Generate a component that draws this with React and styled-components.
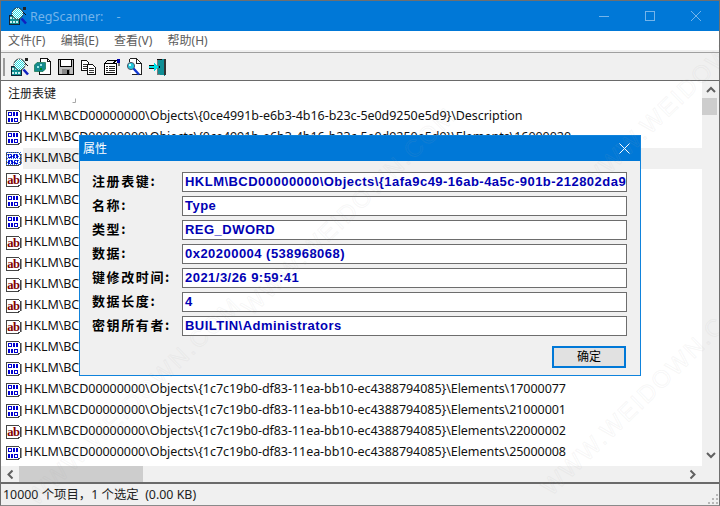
import React from "react";
import styled, { createGlobalStyle } from "styled-components";

const Global = createGlobalStyle`
  html, body { margin: 0; padding: 0; background: #fff; }
  #root { width: 720px; height: 506px; overflow: hidden; }
  * { box-sizing: border-box; }
`;

const UI = `"Noto Sans", "Noto Sans CJK SC", sans-serif`;

const Win = styled.div`
  position: relative;
  width: 720px;
  height: 506px;
  display: flex;
  flex-direction: column;
  border: 1px solid #6f6f6f;
  border-bottom-color: #8a8a8a;
  overflow: hidden;
  font-family: ${UI};
  font-size: 12px;
  color: #000;
  background: #fff;
`;
const TitleBar = styled.div`
  height: 30px;
  flex: none;
  background: #0078d7;
  display: flex;
  align-items: center;
  padding-left: 8px;
  color: #74b4ea;
  font-size: 12.5px;
`;
const TitleText = styled.span`
  margin-left: 3px;
  white-space: pre;
`;
const Caption = styled.div`
  margin-left: auto;
  display: flex;
  height: 100%;
  align-items: center;
`;
const CaptionBtn = styled.div`
  width: 46px;
  height: 100%;
  display: flex;
  align-items: center;
  justify-content: center;
`;
const MenuBar = styled.div`
  height: 18px;
  flex: none;
  display: flex;
  align-items: center;
  padding-left: 7px;
  gap: 15.3px;
  color: #5c5c5c;
  background: #fff;
  line-height: 18px;
  margin-top: 1px;
`;
const MenuItem = styled.span``;
const MenuRule = styled.div`
  flex: none;
  height: 3px;
  background: #f0f0f0;
  border-bottom: 1px solid #a0a0a0;
`;
const Toolbar = styled.div`
  height: 28px;
  flex: none;
  display: flex;
  align-items: center;
  background: #f0f0f0;
  padding-left: 2px;
  border-bottom: 1px solid #6a6a6a;
`;
const Grip = styled.div`
  width: 2px;
  height: 18px;
  background: #9a9a9a;
  margin-right: 3px;
`;
const ToolBtn = styled.div`
  width: 23px;
  height: 22px;
  display: flex;
  align-items: center;
  justify-content: center;
`;
const Body = styled.div`
  flex: 1;
  min-height: 0;
  display: grid;
  grid-template-columns: 1fr 17px;
  grid-template-rows: 1fr 16px;
`;
const ListPane = styled.div`
  overflow: hidden;
  background: #fff;
`;
const Header = styled.div`
  height: 25px;
  display: flex;
  align-items: center;
  padding: 0 0 2px 7px;
  color: #1a1a1a;
`;
const SortMark = styled.span`
  margin-left: 16px;
  width: 5px;
  height: 5px;
  display: inline-block;
`;
const Row = styled.div`
  height: 21px;
  display: flex;
  align-items: center;
  padding-left: 5px;
  white-space: nowrap;
`;
const RowIcon = styled.span`
  width: 16px;
  height: 16px;
  flex: none;
  margin: 1px 1px 0 0;
  display: flex;
`;
const RowText = styled.span`
  flex: 1;
  height: 21px;
  line-height: 20px;
  padding-left: 1px;
  font-size: 12.5px;
  letter-spacing: ${(p) => p.$ls}px;
  background: ${(p) => (p.$sel ? "#f0f0f0" : "transparent")};
  color: #111;
`;
const VBar = styled.div`
  grid-row: 1 / 3;
  grid-column: 2;
  background: #f0f0f0;
  display: flex;
  flex-direction: column;
`;
const VArrow = styled.div`
  height: 17px;
  display: flex;
  align-items: center;
  justify-content: center;
  margin-top: ${(p) => p.$top || 0}px;
`;
const VThumb = styled.div`
  height: 17px;
  width: 15px;
  background: #cdcdcd;
`;
const HBar = styled.div`
  background: #f0f0f0;
  display: flex;
  align-items: center;
`;
const HArrow = styled.div`
  width: 18px;
  height: 16px;
  display: flex;
  align-items: center;
  justify-content: center;
  margin-left: ${(p) => (p.$end ? "auto" : "0")};
`;
const HThumb = styled.div`
  width: 124px;
  height: 16px;
  background: #cdcdcd;
`;
const Status = styled.div`
  position: relative;
  height: 23px;
  flex: none;
  display: flex;
  align-items: center;
  padding: 0 0 1px 2px;
  background: #f0f0f0;
  border-top: 2px solid #6a6a6a;
  color: #222;
  font-size: 12.4px;
  white-space: pre;
`;
const SizeGrip = styled.span`
  position: absolute;
  right: 1px;
  bottom: 1px;
  display: flex;
`;

const Dialog = styled.div`
  position: absolute;
  left: 78px;
  top: 134px;
  width: 562px;
  height: 241px;
  background: #f0f0f0;
  border: 1px solid #0f83dc;
  display: flex;
  flex-direction: column;
`;
const DlgTitle = styled.div`
  height: 25px;
  flex: none;
  background: #0078d7;
  color: #fff;
  display: flex;
  align-items: center;
  padding: 0 10px 1px 3px;
  justify-content: space-between;
`;
const DlgBody = styled.div`
  flex: 1;
  padding: 11px 13px 7px 12px;
  display: flex;
  flex-direction: column;
  gap: 4px;
`;
const FieldRow = styled.div`
  display: flex;
  height: 20px;
  align-items: center;
`;
const Label = styled.div`
  width: 90px;
  flex: none;
  font-weight: 700;
  font-size: 13px;
  letter-spacing: 1.6px;
  line-height: 18px;
  margin-top: -2px;
  color: #000;
  font-family: "Noto Sans CJK SC", sans-serif;
  white-space: nowrap;
`;
const Field = styled.div`
  flex: 1;
  height: 20px;
  background: #fff;
  border: 1px solid #6d6d6d;
  color: #0000b4;
  font-family: "Liberation Sans", sans-serif;
  font-weight: 700;
  font-size: 13px;
  letter-spacing: 0.47px;
  line-height: 18px;
  padding-left: 2px;
  white-space: nowrap;
  overflow: hidden;
`;
const Footer = styled.div`
  display: flex;
  justify-content: flex-end;
  margin-top: 6px;
  padding-right: 1px;
`;
const OkBtn = styled.button`
  width: 74px;
  height: 22px;
  background: #e1e1e1;
  border: 2px solid #0078d7;
  border-radius: 0;
  padding: 0;
  font-family: ${UI};
  font-size: 12px;
  color: #000;
  line-height: 16px;
`;
const Mark = styled.div`
  position: absolute;
  left: ${(p) => p.$x}px;
  top: ${(p) => p.$y}px;
  transform: rotate(-44deg);
  transform-origin: 0 0;
  font-family: "Liberation Sans", sans-serif;
  font-size: 24px;
  letter-spacing: 2px;
  color: transparent;
  -webkit-text-stroke: 1px rgba(170, 170, 170, 0.1);
  white-space: nowrap;
  pointer-events: none;
`;

/* ---------- icons ---------- */
const Px = ({ s = 18, vb = 18, children }) => (
  <svg width={s} height={s} viewBox={`0 0 ${vb} ${vb}`} shapeRendering="crispEdges">
    {children}
  </svg>
);
const Doc = () => (
  <>
    <path d="M0.5 1.5H12.5L14.5 3.5V12.5L12 14.5H0.5Z" fill="#fff" stroke="#444" />
    <rect x="15" y="3" width="1" height="10" fill="#999" />
  </>
);
const Zero = ({ x, y }) => (
  <>
    <rect x={x} y={y} width="4" height="4" fill="#0000d0" />
    <rect x={x + 1} y={y + 1} width="2" height="2" fill="#fff" />
  </>
);
const One = ({ x, y }) => <rect x={x} y={y} width="2" height="4" fill="#0000d0" />;
const BinIcon = ({ sel }) => (
  <Px s={16} vb={16}>
    <Doc />
    <Zero x={2} y={3} />
    <One x={7} y={3} />
    <One x={10} y={3} />
    <One x={2} y={9} />
    <One x={5} y={9} />
    <Zero x={8} y={9} />
    {sel && (
      <g fill="#2f6fe8">
        {Array.from({ length: 7 }).map((_, r) =>
          Array.from({ length: 8 }).map((_, c) => (
            <rect key={`${r}-${c}`} x={c * 2 + (r % 2)} y={1 + r * 2} width="1" height="1" />
          ))
        )}
      </g>
    )}
  </Px>
);
const AbIcon = () => (
  <svg width="16" height="16" viewBox="0 0 16 16">
    <g shapeRendering="crispEdges">
      <Doc />
    </g>
    <text x="1.2" y="11.5" fontFamily="Liberation Serif, serif" fontWeight="700" fontSize="12.5" fill="#800000" letterSpacing="-0.5">
      ab
    </text>
  </svg>
);
const lensDots = [];
for (let i = 0; i < 12; i++) {
  for (let j = 0; j < 12; j++) {
    if ((i + j) % 2 === 0 && Math.hypot(i - 5, j - 5) < 5.2) lensDots.push([3 + i, 1 + j]);
  }
}
const ScanIcon = () => (
  <Px>
    <rect x="0" y="8" width="11" height="10" fill="#123" />
    <rect x="1" y="9" width="9" height="8" fill="#0f8f92" />
    {[1, 4, 7].map((x) => [10, 14].map((y) => <rect key={`${x}${y}`} x={x} y={y} width="2" height="2" fill="#c8f2f2" />))}
    <circle cx="8.5" cy="6.5" r="5.5" fill="#22dce2" stroke="#333" shapeRendering="auto" />
    {lensDots.map(([x, y]) => <rect key={`${x}-${y}`} x={x} y={y} width="1" height="1" fill="#fff" />)}
    <path d="M12.5 11.5L17 16.5" stroke="#1020c0" strokeWidth="2.6" shapeRendering="auto" />
    <rect x="14" y="0" width="3" height="3" fill="#222" />
    <path d="M14 5L17 8" stroke="#111" shapeRendering="auto" />
  </Px>
);
const CubeDocIcon = () => (
  <Px>
    <path d="M6.5 3.5V0.5H13.5L16.5 3.5V16.5H5.5V13" stroke="#111" fill="#fff" />
    <path d="M13.5 0.5V3.5H16.5" stroke="#111" fill="none" />
    <path d="M3 4.5H11.5V11L9 13.5H0.5V7Z" fill="#158a8e" stroke="#063" strokeWidth="0.6" shapeRendering="auto" />
    <rect x="3" y="8" width="2" height="2" fill="#9fe8e8" />
    <rect x="6" y="6" width="2" height="2" fill="#9fe8e8" />
    <rect x="6" y="10" width="2" height="2" fill="#082" />
  </Px>
);
const FloppyIcon = () => (
  <Px>
    <rect x="1.5" y="1.5" width="15" height="15" fill="#bdbdbd" stroke="#000" strokeWidth="1.4" />
    <rect x="4" y="2" width="10" height="7" fill="#fff" />
    <rect x="4" y="8" width="10" height="1" fill="#000" />
    <rect x="3" y="2" width="1" height="7" fill="#000" />
    <rect x="14" y="2" width="1" height="7" fill="#000" />
    <rect x="5" y="11" width="8" height="5" fill="#888" />
    <rect x="10" y="12" width="2" height="4" fill="#000" />
  </Px>
);
const CopyIcon = () => (
  <Px>
    <path d="M1.5 2.5H6.5L8.5 4.5V12.5H1.5Z" fill="#fff" stroke="#111" />
    <path d="M3 6.5H7M3 8.5H7M3 10.5H7" stroke="#333" />
    <path d="M7.5 6.5H12.5L15.5 9.5V16.5H7.5Z" fill="#fff" stroke="#111" />
    <path d="M9 10.5H14M9 12.5H14M9 14.5H14" stroke="#333" />
  </Px>
);
const PropsIcon = () => (
  <Px>
    <path d="M1.5 5.5H13.5V16.5H1.5Z" fill="#fff" stroke="#000" />
    <path d="M1.5 5.5L4.5 2.5H13" stroke="#000" fill="none" />
    <path d="M3 8.5H5M6 8.5H12M3 10.5H5M6 10.5H12M3 12.5H5M6 12.5H12M3 14.5H12" stroke="#222" />
    <path d="M10 5L15 1.5" stroke="#000" />
    <rect x="14" y="1" width="3" height="4" fill="#0000a8" />
    <rect x="15" y="5" width="2" height="3" fill="#777" />
  </Px>
);
const FindIcon = () => (
  <Px>
    <path d="M3.5 0.5H10.5L15.5 5.5V16.5H5.5" fill="#fff" stroke="#222" />
    <path d="M3.5 0.5V4" stroke="#222" />
    <path d="M10.5 0.5V5.5H15.5" stroke="#222" fill="none" />
    <circle cx="5" cy="8" r="3.6" fill="#22c8dc" stroke="#556" shapeRendering="auto" />
    <rect x="3" y="6" width="2" height="2" fill="#cff" />
    <path d="M7.5 10.5L13 16.5" stroke="#1238d0" strokeWidth="2.4" shapeRendering="auto" />
  </Px>
);
const ExitIcon = () => (
  <Px>
    <rect x="8" y="1" width="9" height="16" fill="#7a7a7a" />
    <rect x="8" y="1" width="9" height="1" fill="#111" />
    <path d="M9 2.5L15.5 1V17.5L9 16Z" fill="#0f8f96" />
    <rect x="15" y="1" width="2" height="16" fill="#333" />
    <rect x="10" y="8" width="1" height="2" fill="#000" />
    <rect x="0" y="8" width="5" height="2" fill="#00e0e8" />
    <path d="M5 5V13L9 9Z" fill="#00e0e8" />
    <rect x="0" y="7" width="5" height="1" fill="#111" />
    <rect x="0" y="10" width="5" height="1" fill="#111" />
  </Px>
);
const Chevron = ({ dir }) => {
  const rot = { up: 0, down: 180, left: -90, right: 90 }[dir];
  return (
    <svg width="10" height="7" viewBox="0 0 10 7" style={{ transform: `rotate(${rot}deg)` }}>
      <path d="M1 6L5 2L9 6" stroke="#606060" strokeWidth="2" fill="none" />
    </svg>
  );
};
const Dots = () => (
  <svg width="10" height="10" viewBox="0 0 10 10" shapeRendering="crispEdges">
    {[[8, 0], [4, 4], [8, 4], [0, 8], [4, 8], [8, 8]].map(([x, y], i) => (
      <rect key={i} x={x} y={y} width="2" height="2" fill="#b8b8b8" />
    ))}
  </svg>
);

const G1 = "HKLM\\BCD00000000\\Objects\\{0ce4991b-e6b3-4b16-b23c-5e0d9250e5d9}\\";
const G2 = "HKLM\\BCD00000000\\Objects\\{1afa9c49-16ab-4a5c-901b-212802da9460}\\";
const G3 = "HKLM\\BCD00000000\\Objects\\{1c7c19b0-df83-11ea-bb10-ec4388794085}\\";
const rows = [
  ["b", G1 + "Description"],
  ["b", G1 + "Elements\\16000020"],
  ["b", G2 + "Description", true],
  ["a", G2 + "Type"],
  ["b", G2 + "Elements\\16000020"],
  ["b", G2 + "Elements\\16000024"],
  ["a", G2 + "Elements\\11000001"],
  ["a", G2 + "Elements\\12000002"],
  ["a", G2 + "Elements\\12000004"],
  ["a", G2 + "Elements\\14000006"],
  ["a", G2 + "Elements\\15000011"],
  ["b", G3 + "Description"],
  ["b", G3 + "Elements\\16000020"],
  ["b", G3 + "Elements\\17000077"],
  ["b", G3 + "Elements\\21000001"],
  ["a", G3 + "Elements\\22000002"],
  ["b", G3 + "Elements\\25000008"],
];
const fields = [
  ["注册表键:", "HKLM\\BCD00000000\\Objects\\{1afa9c49-16ab-4a5c-901b-212802da9"],
  ["名称:", "Type"],
  ["类型:", "REG_DWORD"],
  ["数据:", "0x20200004 (538968068)"],
  ["键修改时间:", "2021/3/26 9:59:41"],
  ["数据长度:", "4"],
  ["密钥所有者:", "BUILTIN\\Administrators"],
];
const tools = [ScanIcon, CubeDocIcon, FloppyIcon, CopyIcon, PropsIcon, FindIcon, ExitIcon];
const LS = -0.05;

export default function App() {
  return (
    <>
      <Global />
      <Win>
        <TitleBar>
          <ScanIcon />
          <TitleText>{"RegScanner:    -"}</TitleText>
          <Caption>
            <CaptionBtn>
              <svg width="10" height="10" viewBox="0 0 10 10"><path d="M0 5.5H10" stroke="#74b4ea" /></svg>
            </CaptionBtn>
            <CaptionBtn>
              <svg width="10" height="10" viewBox="0 0 10 10"><rect x=".5" y=".5" width="9" height="9" fill="none" stroke="#74b4ea" /></svg>
            </CaptionBtn>
            <CaptionBtn>
              <svg width="10" height="10" viewBox="0 0 10 10"><path d="M0 0L10 10M10 0L0 10" stroke="#74b4ea" /></svg>
            </CaptionBtn>
          </Caption>
        </TitleBar>
        <MenuBar>
          <MenuItem>文件(F)</MenuItem>
          <MenuItem>编辑(E)</MenuItem>
          <MenuItem>查看(V)</MenuItem>
          <MenuItem>帮助(H)</MenuItem>
        </MenuBar>
        <MenuRule />
        <Toolbar>
          <Grip />
          {tools.map((T, i) => (
            <ToolBtn key={i}><T /></ToolBtn>
          ))}
        </Toolbar>
        <Body>
          <ListPane>
            <Header>
              注册表键
              <SortMark>
                <svg width="5" height="5" viewBox="0 0 5 5"><path d="M0.5 4.5H3.5V0.5" stroke="#a8a8a8" fill="none" /></svg>
              </SortMark>
            </Header>
            {rows.map(([t, text, sel], i) => (
              <Row key={i}>
                <RowIcon>{t === "b" ? <BinIcon sel={sel} /> : <AbIcon />}</RowIcon>
                <RowText $sel={sel} $ls={LS}>{text}</RowText>
              </Row>
            ))}
          </ListPane>
          <VBar>
            <VArrow><Chevron dir="up" /></VArrow>
            <VThumb />
            <VArrow $top={332}><Chevron dir="down" /></VArrow>
          </VBar>
          <HBar>
            <HArrow><Chevron dir="left" /></HArrow>
            <HThumb />
            <HArrow $end><Chevron dir="right" /></HArrow>
          </HBar>
        </Body>
        <Status>
          {"10000 个项目，1 个选定  (0.00 KB)"}
          <SizeGrip><Dots /></SizeGrip>
        </Status>
        <Dialog>
          <DlgTitle>
            属性
            <svg width="11" height="11" viewBox="0 0 11 11"><path d="M0.5 0.5L10.5 10.5M10.5 0.5L0.5 10.5" stroke="#fff" /></svg>
          </DlgTitle>
          <DlgBody>
            {fields.map(([l, v]) => (
              <FieldRow key={l}>
                <Label>{l}</Label>
                <Field>{v}</Field>
              </FieldRow>
            ))}
            <Footer><OkBtn>确定</OkBtn></Footer>
          </DlgBody>
        </Dialog>
        <Mark $x={535} $y={480}>WWW.WEIDOWN.COM</Mark>
        <Mark $x={575} $y={175}>WWW.WEIDOWN.COM</Mark>
        <Mark $x={20} $y={490}>WWW.WEIDOWN.COM</Mark>
        <Mark $x={235} $y={300}>WWW.WEIDOWN.COM</Mark>
      </Win>
    </>
  );
}
